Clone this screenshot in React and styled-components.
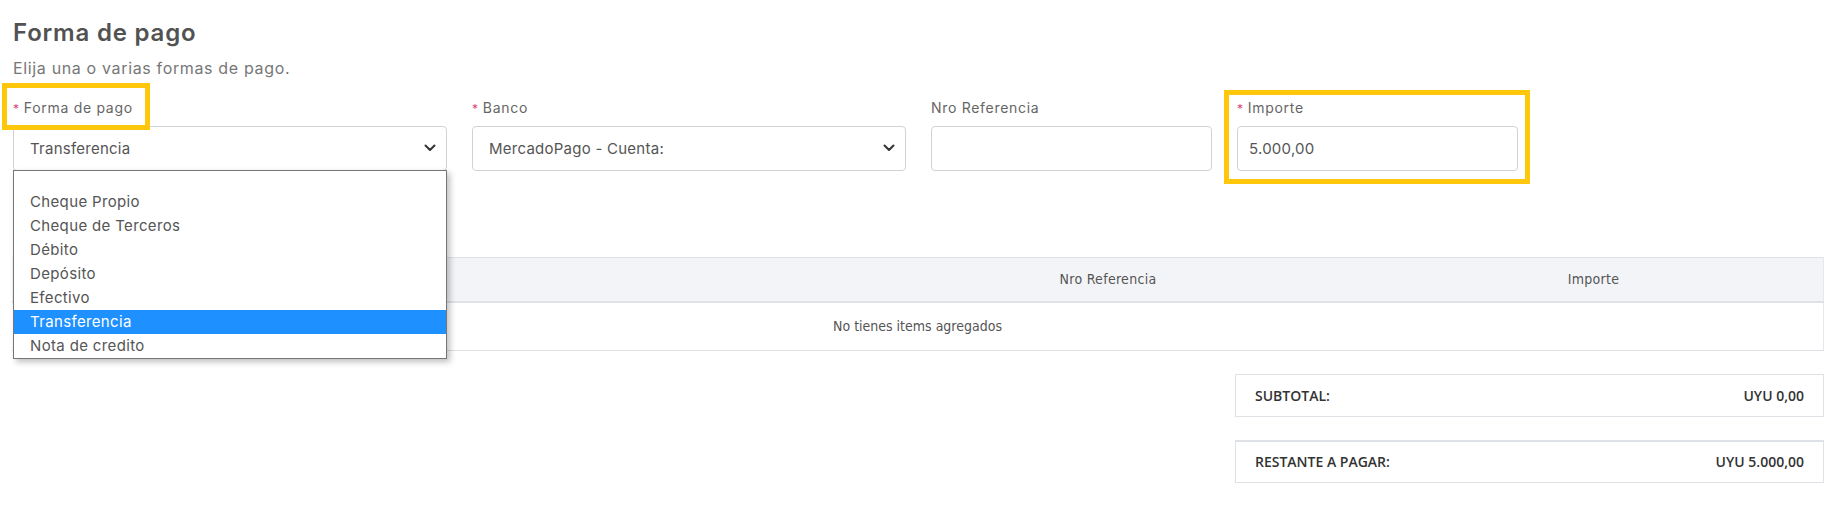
import React from 'react'
import styled, { createGlobalStyle } from 'styled-components'

const GlobalStyle = createGlobalStyle`
    html, body {
        margin: 0;
        padding: 0;
        background: #ffffff;
    }
    body {
        font-family: Inter, "Noto Sans", sans-serif;
        color: #555555;
    }
`;

const opciones = [
    '',
    'Cheque Propio',
    'Cheque de Terceros',
    'Débito',
    'Depósito',
    'Efectivo',
    'Transferencia',
    'Nota de credito',
]

function Chevron() {
    return (
        <svg width="12" height="8" viewBox="0 0 12 8" fill="none">
            <path d="M1.5 1.5 L6 6 L10.5 1.5" stroke="#333" strokeWidth="2" strokeLinecap="round" strokeLinejoin="round" />
        </svg>
    )
}

function App() {
    return (
        <Page>
            <GlobalStyle />
            <Title>Forma de pago</Title>
            <Subtitle>Elija una o varias formas de pago.</Subtitle>

            <FormRow>
                <Field span={3}>
                    <Label required>Forma de pago</Label>
                    <Control select>
                        <span>Transferencia</span>
                        <Chevron />
                    </Control>
                    <Highlight className="label-mark" />
                    <OptionList>
                        {opciones.map((o, i) => (
                            <Option key={i} empty={o === ''} selected={o === 'Transferencia'}>{o}</Option>
                        ))}
                    </OptionList>
                </Field>

                <Field span={3}>
                    <Label required>Banco</Label>
                    <Control select>
                        <span>MercadoPago - Cuenta:</span>
                        <Chevron />
                    </Control>
                </Field>

                <Field span={2}>
                    <Label>Nro Referencia</Label>
                    <Control />
                </Field>

                <Field span={2}>
                    <Label required>Importe</Label>
                    <Control>
                        <span>5.000,00</span>
                    </Control>
                    <Highlight className="field-mark" />
                </Field>
            </FormRow>

            <Table>
                <colgroup>
                    <col style={{ width: '840px' }} />
                    <col style={{ width: '512px' }} />
                    <col />
                </colgroup>
                <thead>
                    <tr>
                        <th></th>
                        <th>Nro Referencia</th>
                        <th>Importe</th>
                    </tr>
                </thead>
                <tbody>
                    <tr>
                        <td colSpan={3}>No tienes items agregados</td>
                    </tr>
                </tbody>
            </Table>

            <Totals>
                <TotalBox>
                    <span>SUBTOTAL:</span>
                    <span>UYU 0,00</span>
                </TotalBox>
                <TotalBox strong>
                    <span>RESTANTE A PAGAR:</span>
                    <span>UYU 5.000,00</span>
                </TotalBox>
            </Totals>
        </Page>
    )
}

const Page = styled.div`
    width: 1836px;
    box-sizing: border-box;
    padding: 19px 12px 0 12px;
`;

const Title = styled.h2`
    margin: 0;
    font-size: 24px;
    line-height: 28.8px;
    font-weight: 600;
    color: #525252;
    letter-spacing: 0.8px;
    padding-left: 1px;
`;

const Subtitle = styled.p`
    margin: 8px 0 0 0;
    font-size: 16px;
    line-height: 24px;
    color: #777777;
    letter-spacing: 0.65px;
    padding-left: 1px;
`;

const FormRow = styled.div`
    display: grid;
    grid-template-columns: repeat(12, 1fr);
    column-gap: 24px;
    margin-top: 17px;
`;

const Field = styled.div`
    grid-column: span ${(p) => p.span};
    position: relative;
    padding-left: 1px;

    .label-mark {
        left: -10px;
        top: -14px;
        width: 138px;
        height: 37px;
    }

    .field-mark {
        left: -12px;
        top: -7px;
        width: 296px;
        height: 84px;
    }
`;

const Label = styled.label`
    display: block;
    font-size: 14px;
    line-height: 21px;
    color: #666666;
    letter-spacing: 0.7px;
    margin-bottom: 7px;

    &::before {
        content: ${(p) => (p.required ? "'* '" : "''")};
        color: #e0447a;
        font-size: 12px;
    }
`;

const Control = styled.div`
    height: 45px;
    box-sizing: border-box;
    border: 1px solid #cfd3d8;
    border-radius: 4px;
    background: #fff;
    display: flex;
    align-items: center;
    justify-content: space-between;
    padding: 0 10px 0 ${(p) => (p.select ? '16px' : '11px')};
    font-size: 15px;
    letter-spacing: 0.25px;
    color: #555555;

    svg {
        flex-shrink: 0;
    }
`;

const Highlight = styled.div`
    position: absolute;
    border: 5px solid #fec70b;
    pointer-events: none;
`;

const OptionList = styled.ul`
    position: absolute;
    z-index: 10;
    left: 1px;
    right: 0;
    top: 73px;
    margin: 0;
    padding: 0;
    list-style: none;
    background: #fff;
    border: 1px solid #767676;
    box-shadow: 3px 3px 6px rgba(0, 0, 0, 0.25);
`;

const Option = styled.li`
    height: ${(p) => (p.empty ? '19px' : '24px')};
    line-height: 24px;
    padding-left: 16px;
    font-size: 15px;
    letter-spacing: 0.35px;
    color: ${(p) => (p.selected ? '#ffffff' : '#555555')};
    background: ${(p) => (p.selected ? '#1e90ff' : 'transparent')};
`;

const Table = styled.table`
    width: 100%;
    margin-top: 86px;
    border-collapse: collapse;
    table-layout: fixed;
    font-family: "Liberation Sans Narrow", "DejaVu Sans Condensed", "Open Sans", sans-serif;
    font-size: 14px;
    color: #555555;

    thead th {
        background: #f3f4f7;
        border-top: 1px solid #dee2e6;
        border-bottom: 2px solid #dee2e6;
        height: 43px;
        font-weight: 400;
        text-align: center;
        letter-spacing: 0.3px;
    }

    tbody td {
        height: 47px;
        border-bottom: 1px solid #dee2e6;
        text-align: center;
    }

    th, td {
        padding: 0;
    }

    th:last-child, td:last-child {
        border-right: 1px solid #e6e9ec;
    }
`;

const Totals = styled.div`
    display: grid;
    grid-template-columns: repeat(12, 1fr);
    column-gap: 24px;
    row-gap: 23px;
    margin-top: 23px;
`;

const TotalBox = styled.div`
    grid-column: 9 / span 4;
    margin-left: -1px;
    height: 43px;
    box-sizing: border-box;
    border: 1px solid #dee2e6;
    border-top-width: ${(p) => (p.strong ? '2px' : '1px')};
    display: flex;
    align-items: center;
    justify-content: space-between;
    padding: 0 19px;
    font-family: "Open Sans", sans-serif;
    font-size: 14px;
    font-weight: 600;
    color: #333333;
`;

export default App
